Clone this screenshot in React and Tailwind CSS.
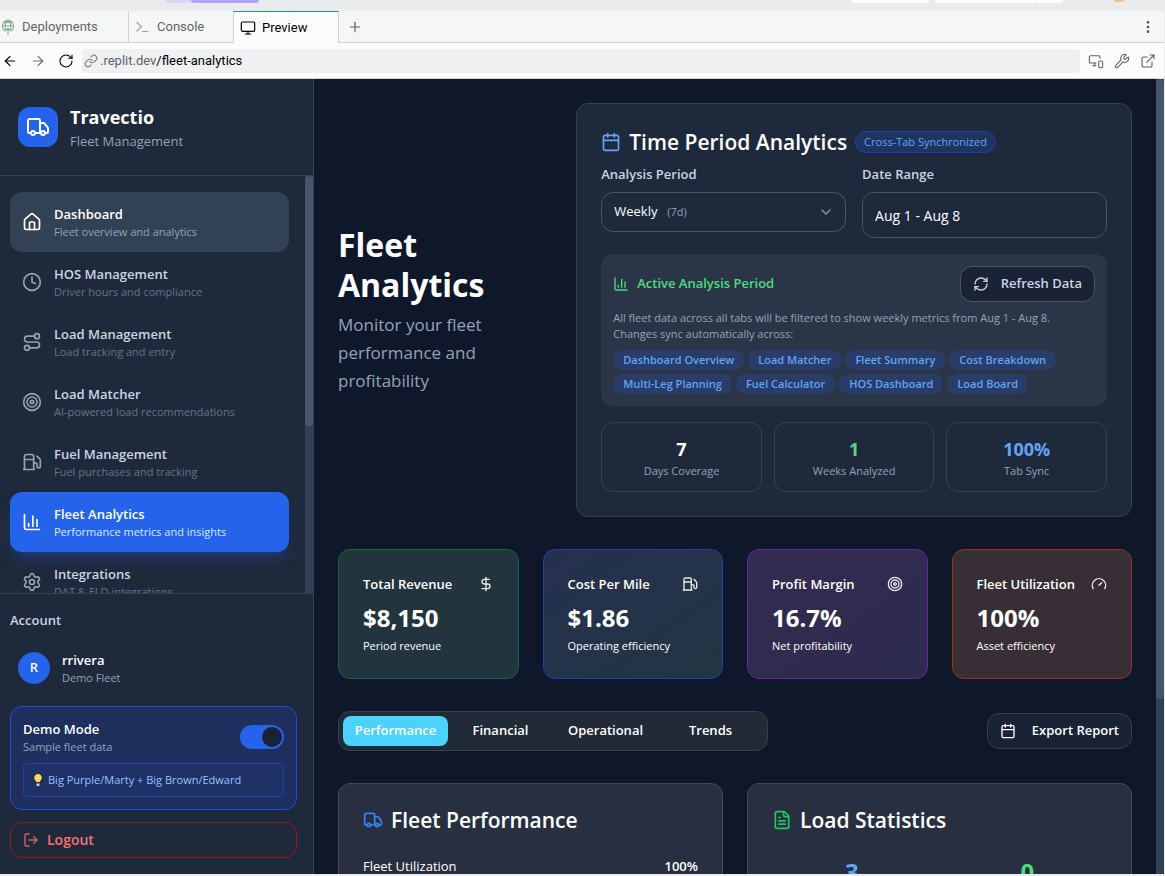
import React from "react";
import {
  ArrowLeft,
  ArrowRight,
  Calendar,
  ChartColumn,
  ChevronDown,
  Clock,
  DollarSign,
  EllipsisVertical,
  ExternalLink,
  FileText,
  Fuel,
  Gauge,
  House,
  LogOut,
  Monitor,
  MonitorSmartphone,
  Plus,
  RefreshCw,
  RotateCw,
  Route,
  Settings,
  Target,
  Truck,
  Wrench,
} from "lucide-react";

function DeployIcon() {
  return (
    <svg className="size-4 shrink-0 text-[#86ab93]" viewBox="0 0 16 16" fill="none" stroke="currentColor" strokeWidth="1.1" strokeLinecap="round" aria-hidden="true">
      <path d="M5 11.900A5.700 5.700 0 1 1 11 11.900" />
      <path d="M2.300 6.800h11.400M3.600 3.400h8.800" />
      <path d="M5.800 10.800C4.400 7 5.400 2.800 8 1.200c2.600 1.600 3.600 5.800 2.200 9.600" />
      <path d="M8 15.500V9.200M5.800 11.400 8 9.200l2.200 2.200" />
    </svg>
  );
}

function PromptIcon() {
  return (
    <svg className="size-4 shrink-0 text-[#a8a294]" viewBox="0 0 16 16" fill="none" stroke="currentColor" strokeWidth="1.2" strokeLinecap="round" aria-hidden="true">
      <path d="M2 3.500l4.500 4.200L2 12M7.500 12.500h5.500" />
    </svg>
  );
}

function ChainIcon() {
  return (
    <svg className="size-3.5 shrink-0 text-[#74777d]" viewBox="0 0 24 24" fill="none" stroke="currentColor" strokeWidth="1.8" strokeLinecap="round" strokeLinejoin="round" aria-hidden="true">
      <path d="M10 13a5 5 0 0 0 7.540.540l3-3a5 5 0 0 0-7.070-7.070l-1.720 1.710" />
      <path d="M14 11a5 5 0 0 0-7.540-.540l-3 3a5 5 0 0 0 7.070 7.070l1.710-1.710" />
    </svg>
  );
}

function BrowserChrome() {
  return (
    <header className="shrink-0 font-['Roboto',sans-serif]">
      <div className="flex h-[11px] items-start bg-[#eaebed]">
        <div className="ml-[165px] h-[3px] w-[26px] rounded-bl bg-[#dcd5f8]" />
        <div className="h-[3px] w-[68px] rounded-b bg-[#b3a3fb]" />
        <div className="ml-auto h-[3px] w-[78px] rounded-b bg-[#fcfcfc]" />
        <div className="ml-1.5 h-[3px] w-[101px] rounded-bl bg-[#fcfcfc]" />
        <div className="ml-px h-[3px] w-[26px] rounded-br bg-[#fcfcfc]" />
        <div className="mr-10 ml-[51px] h-0.5 w-2.5 rounded-b-full bg-[#f5bd8c]" />
      </div>
      <div className="flex h-8 items-stretch bg-[#f5f7f7] text-[13px] text-[#5f6369]">
        <button className="flex w-[129px] items-center gap-1.5 border-r border-b border-[#cfd1d4] text-left">
          <DeployIcon /> Deployments
        </button>
        <button className="flex w-[104px] items-center gap-1.5 border-b border-[#cfd1d4] pl-1.5 text-left">
          <PromptIcon /> Console
        </button>
        <button className="flex w-[106px] items-center gap-1.5 border-x border-t border-x-[#cfd1d4] border-t-[#1a86f0] bg-[#fcfcfc] pl-1.5 text-left text-black">
          <Monitor className="size-4" strokeWidth={1.8} /> Preview
        </button>
        <div className="flex flex-1 items-center justify-between border-b border-[#cfd1d4] pr-2 pl-2">
          <button aria-label="New tab"><Plus className="size-4 text-[#5c5f63]" strokeWidth={1.8} /></button>
          <button aria-label="More"><EllipsisVertical className="size-4 text-[#4c4f57]" /></button>
        </div>
      </div>
      <div className="flex h-9 items-center border-b border-[#d3d3d5] bg-[#fcfcfc] text-[13px]">
        <button aria-label="Back" className="ml-0.5"><ArrowLeft className="size-4 text-black" strokeWidth={1.8} /></button>
        <button aria-label="Forward" className="ml-3"><ArrowRight className="size-4 text-[#6c6f73]" strokeWidth={1.8} /></button>
        <button aria-label="Reload" className="ml-3"><RotateCw className="size-4 text-black" strokeWidth={1.6} /></button>
        <div className="ml-2 flex h-6 flex-1 items-center gap-0.5 rounded bg-[#eff0f2] pl-0.5">
          <ChainIcon />
          <span className="text-[#5f6369]">.replit.dev<span className="text-black">/fleet-analytics</span></span>
        </div>
        <div className="mr-2 ml-2 flex items-center gap-2.5 text-[#5a5d68]">
          <button aria-label="Devices"><MonitorSmartphone className="size-4" strokeWidth={1.6} /></button>
          <button aria-label="Tools"><Wrench className="size-4" strokeWidth={1.6} /></button>
          <button aria-label="Open in new window"><ExternalLink className="size-4" strokeWidth={1.6} /></button>
        </div>
      </div>
    </header>
  );
}

const navItems = [
  { icon: House, title: "Dashboard", text: "Fleet overview and analytics", box: "bg-[#334155]", iconColor: "text-white", titleColor: "text-white", textColor: "text-[#94a3b8]" },
  { icon: Clock, title: "HOS Management", text: "Driver hours and compliance" },
  { icon: Route, title: "Load Management", text: "Load tracking and entry" },
  { icon: Target, title: "Load Matcher", text: "AI-powered load recommendations" },
  { icon: Fuel, title: "Fuel Management", text: "Fuel purchases and tracking" },
  { icon: ChartColumn, title: "Fleet Analytics", text: "Performance metrics and insights", box: "bg-[#2563eb] shadow-lg shadow-[#2563eb]/25", iconColor: "text-white", titleColor: "text-white", textColor: "text-[#dbeafe]" },
  { icon: Settings, title: "Integrations", text: "DAT & ELD integrations" },
];

function Sidebar() {
  return (
    <aside className="flex w-[314px] shrink-0 flex-col border-r border-[#334155] bg-[#1e293b]">
      <div className="flex items-center gap-3 border-b border-[#334155] px-[18px] py-6">
        <div className="flex size-10 items-center justify-center rounded-xl bg-[#2563eb]">
          <Truck className="size-6 text-white" />
        </div>
        <div>
          <h2 className="text-lg leading-7 font-bold text-white">Travectio</h2>
          <p className="text-[13px] leading-5 text-[#94a3b8]">Fleet Management</p>
        </div>
      </div>
      <div className="flex min-h-0 flex-1">
        <nav className="flex-1 overflow-y-auto py-4 pr-4 pl-2.5 [scrollbar-width:none]">
          {navItems.map(({ icon: Icon, title, text, box = "", iconColor = "text-[#94a3b8]", titleColor = "text-[#cbd5e1]", textColor = "text-[#64748b]" }) => (
            <a key={title} href="#" className={`flex items-center gap-3 rounded-xl p-3 ${box}`}>
              <Icon className={`size-5 shrink-0 ${iconColor}`} />
              <span className="block">
                <span className={`block text-[13px] leading-5 font-semibold ${titleColor}`}>{title}</span>
                <span className={`block text-[11px] leading-4 ${textColor}`}>{text}</span>
              </span>
            </a>
          ))}
        </nav>
        <div className="w-2 bg-[#334155]"><div className="h-3/5 rounded-full bg-[#475569]" /></div>
      </div>
      <div className="flex flex-col gap-3 border-t border-[#334155] py-4 pr-4 pl-2.5">
        <h3 className="text-[13px] leading-5 font-semibold text-[#cbd5e1]">Account</h3>
        <div className="flex items-center gap-3 p-2">
          <div className="flex size-8 items-center justify-center rounded-full bg-[#2563eb] text-[13px] font-semibold text-white">R</div>
          <div>
            <p className="text-[13px] leading-5 font-semibold text-white">rrivera</p>
            <p className="text-[11px] leading-4 text-[#94a3b8]">Demo Fleet</p>
          </div>
        </div>
        <div className="rounded-xl border border-[#1d4ed8] bg-[#1e2f5e] p-3">
          <div className="flex items-center justify-between">
            <label htmlFor="demo">
              <span className="block text-[13px] leading-5 font-semibold text-white">Demo Mode</span>
              <span className="block text-[11px] leading-4 text-[#94a3b8]">Sample fleet data</span>
            </label>
            <input
              id="demo"
              type="checkbox"
              role="switch"
              defaultChecked
              className="flex h-6 w-11 appearance-none items-center rounded-full bg-[#475569] px-0.5 before:size-5 before:rounded-full before:bg-[#1a2234] checked:justify-end checked:bg-[#2563eb]"
            />
          </div>
          <p className="mt-2 flex items-center gap-1 rounded border border-[#1e40af] bg-[#1f3166] p-2 text-[11px] leading-4 text-[#93c5fd]">
            <svg className="h-4 w-3 shrink-0" viewBox="0 0 12 16" aria-hidden="true">
              <path d="M6 1.500a4.300 4.300 0 0 0-4.300 4.300c0 2.200 2 3 2.300 5h4c.300-2 2.300-2.800 2.300-5A4.300 4.300 0 0 0 6 1.500z" fill="#ffd469" stroke="#1b1f2a" strokeWidth="1" />
              <path d="M4 11h4v2.200L6.800 14.500H5.200L4 13.200z" fill="#c9d3df" stroke="#1b1f2a" strokeWidth=".8" />
            </svg>
            Big Purple/Marty + Big Brown/Edward
          </p>
        </div>
        <button className="flex h-9 items-center gap-2 rounded-xl border border-[#991b1b] px-3 text-sm font-semibold text-[#f87171]">
          <LogOut className="size-4 opacity-80" /> Logout
        </button>
      </div>
    </aside>
  );
}

const syncedTabs = ["Dashboard Overview", "Load Matcher", "Fleet Summary", "Cost Breakdown", "Multi-Leg Planning", "Fuel Calculator", "HOS Dashboard", "Load Board"];

const periodStats = [
  { value: "7", label: "Days Coverage", color: "text-white" },
  { value: "1", label: "Weeks Analyzed", color: "text-[#4ade80]" },
  { value: "100%", label: "Tab Sync", color: "text-[#60a5fa]" },
];

function PeriodCard() {
  return (
    <section className="w-[70%] shrink-0 rounded-xl border border-[#334155] bg-[#1e293b] p-6">
      <div className="flex h-7 items-center gap-2">
        <Calendar className="size-5 text-[#60a5fa]" />
        <h2 className="text-[21px] leading-7 font-semibold whitespace-nowrap text-white">Time Period Analytics</h2>
        <span className="rounded-full border border-[#1e40af] bg-[#1f3560] px-2 py-0.5 text-[11px] leading-4 font-medium whitespace-nowrap text-[#60a5fa]">Cross-Tab Synchronized</span>
      </div>
      <div className="mt-2 grid grid-cols-2 gap-4">
        <div>
          <label htmlFor="period" className="mb-2 block text-[13px] leading-5 font-semibold text-[#cbd5e1]">Analysis Period</label>
          <div className="relative">
            <select id="period" className="h-10 w-full appearance-none rounded-xl border border-[#475569] bg-[#1e293b] px-3 text-[13px] text-white">
              <option>Weekly</option>
              <option>Monthly</option>
            </select>
            <span className="pointer-events-none absolute inset-y-0 left-[66px] flex items-center text-[11px] text-[#94a3b8]">(7d)</span>
            <ChevronDown className="pointer-events-none absolute inset-y-0 right-3 my-auto size-4 text-[#8b95a5]" />
          </div>
        </div>
        <div>
          <label htmlFor="range" className="mb-2 block text-[13px] leading-5 font-semibold text-[#cbd5e1]">Date Range</label>
          <input id="range" readOnly value="Aug 1 - Aug 8" className="h-[46px] w-full rounded-xl border border-[#475569] bg-[#1e293b] px-3 text-sm text-white" />
        </div>
      </div>
      <div className="mt-4 rounded-xl bg-[#2a3648] p-3">
        <div className="flex items-center justify-between">
          <h3 className="flex items-center gap-2 text-[13px] font-semibold text-[#4ade80]">
            <ChartColumn className="size-4" /> Active Analysis Period
          </h3>
          <button className="flex h-9 items-center gap-3 rounded-xl border border-[#475569] bg-[#1a2235] px-3 text-[13px] font-semibold text-[#cbd5e1]">
            <RefreshCw className="size-4" /> Refresh Data
          </button>
        </div>
        <p className="mt-2 text-[11px] leading-4 text-[#94a3b8]">
          All fleet data across all tabs will be filtered to show weekly metrics from Aug 1 - Aug 8.
          <br />
          Changes sync automatically across:
        </p>
        <div className="mt-2 flex flex-wrap gap-1">
          {syncedTabs.map((tab) => (
            <span key={tab} className="rounded-full bg-[#293d68] px-2.5 py-0.5 text-[11px] leading-4 font-semibold text-[#60a5fa]">{tab}</span>
          ))}
        </div>
      </div>
      <div className="mt-4 grid grid-cols-3 gap-3">
        {periodStats.map((s) => (
          <div key={s.label} className="rounded-xl border border-[#334155] p-3 text-center">
            <p className={`text-lg leading-7 font-bold ${s.color}`}>{s.value}</p>
            <p className="text-[11px] leading-4 text-[#94a3b8]">{s.label}</p>
          </div>
        ))}
      </div>
    </section>
  );
}

const metrics = [
  { title: "Total Revenue", value: "$8,150", text: "Period revenue", icon: DollarSign, box: "border-[#166534] bg-[#22343d]" },
  { title: "Cost Per Mile", value: "$1.86", text: "Operating efficiency", icon: Fuel, box: "border-[#1e40af] bg-linear-to-br from-[#25304f] to-[#223543]" },
  { title: "Profit Margin", value: "16.7%", text: "Net profitability", icon: Target, box: "border-[#6b21a8] bg-linear-to-br from-[#342b50] to-[#2c2b4e]" },
  { title: "Fleet Utilization", value: "100%", text: "Asset efficiency", icon: Gauge, box: "border-[#9a3412] bg-[#382f36]" },
];

function Dashboard() {
  return (
    <main className="flex min-w-0 flex-1 bg-[#0f172a]">
      <div className="min-w-0 flex-1 overflow-y-auto p-6 [scrollbar-width:none]">
        <div className="flex items-center justify-between gap-4">
          <div>
            <h1 className="text-[32px] leading-10 font-bold text-white">Fleet Analytics</h1>
            <p className="mt-1.5 text-[17px] leading-7 text-[#94a3b8]">Monitor your fleet performance and profitability</p>
          </div>
          <PeriodCard />
        </div>
        <div className="mt-8 grid grid-cols-4 gap-6">
          {metrics.map(({ title, value, text, icon: Icon, box }) => (
            <section key={title} className={`rounded-xl border p-6 text-white ${box}`}>
              <div className="flex items-center justify-between">
                <h3 className="text-[13px] leading-5 font-semibold whitespace-nowrap">{title}</h3>
                <Icon className="size-4 shrink-0 opacity-90" />
              </div>
              <p className="mt-2 text-2xl leading-8 font-bold">{value}</p>
              <p className="mt-1 text-[11px] leading-4">{text}</p>
            </section>
          ))}
        </div>
        <div className="mt-8 flex items-center justify-between">
          <div role="tablist" className="grid h-10 w-[430px] grid-cols-4 rounded-xl border border-[#353f4e] bg-[#212a37] p-1 text-[13px] font-semibold text-white">
            <button role="tab" aria-selected="true" className="rounded-lg bg-[#4bd2ff]">Performance</button>
            <button role="tab" aria-selected="false" className="rounded-lg">Financial</button>
            <button role="tab" aria-selected="false" className="rounded-lg">Operational</button>
            <button role="tab" aria-selected="false" className="rounded-lg">Trends</button>
          </div>
          <button className="flex h-9 items-center gap-4 rounded-xl border border-[#353f4e] bg-[#1a2235] px-3 text-[13px] font-semibold text-white">
            <Calendar className="size-4" /> Export Report
          </button>
        </div>
        <div className="mt-8 grid grid-cols-2 gap-6">
          <section className="rounded-xl border border-[#3f4a5b] bg-[#272f40] p-6 text-white">
            <h2 className="flex h-6 items-center gap-2 text-[21px] leading-6 font-semibold">
              <Truck className="size-5 text-[#3b82f6]" /> Fleet Performance
            </h2>
            <div className="mt-6 flex items-center justify-between text-[13px] leading-5">
              <span>Fleet Utilization</span>
              <span className="font-semibold">100%</span>
            </div>
          </section>
          <section className="rounded-xl border border-[#3f4a5b] bg-[#272f40] p-6 text-white">
            <h2 className="flex h-6 items-center gap-2 text-[21px] leading-6 font-semibold">
              <FileText className="size-5 text-[#22c55e]" /> Load Statistics
            </h2>
            <div className="mt-6 grid grid-cols-2 gap-4 text-center text-2xl leading-8 font-bold">
              <p className="text-[#60a5fa]">3</p>
              <p className="text-[#4ade80]">0</p>
            </div>
          </section>
        </div>
      </div>
      <div className="w-2 bg-[#334155]"><div className="h-[78%] rounded-full bg-[#475569]" /></div>
    </main>
  );
}

export default function App() {
  return (
    <div className="flex h-screen flex-col bg-[#ececee] pr-px pb-0.5 font-['Open_Sans','Noto_Sans',sans-serif]">
      <BrowserChrome />
      <div className="flex min-h-0 flex-1">
        <Sidebar />
        <Dashboard />
      </div>
    </div>
  );
}
